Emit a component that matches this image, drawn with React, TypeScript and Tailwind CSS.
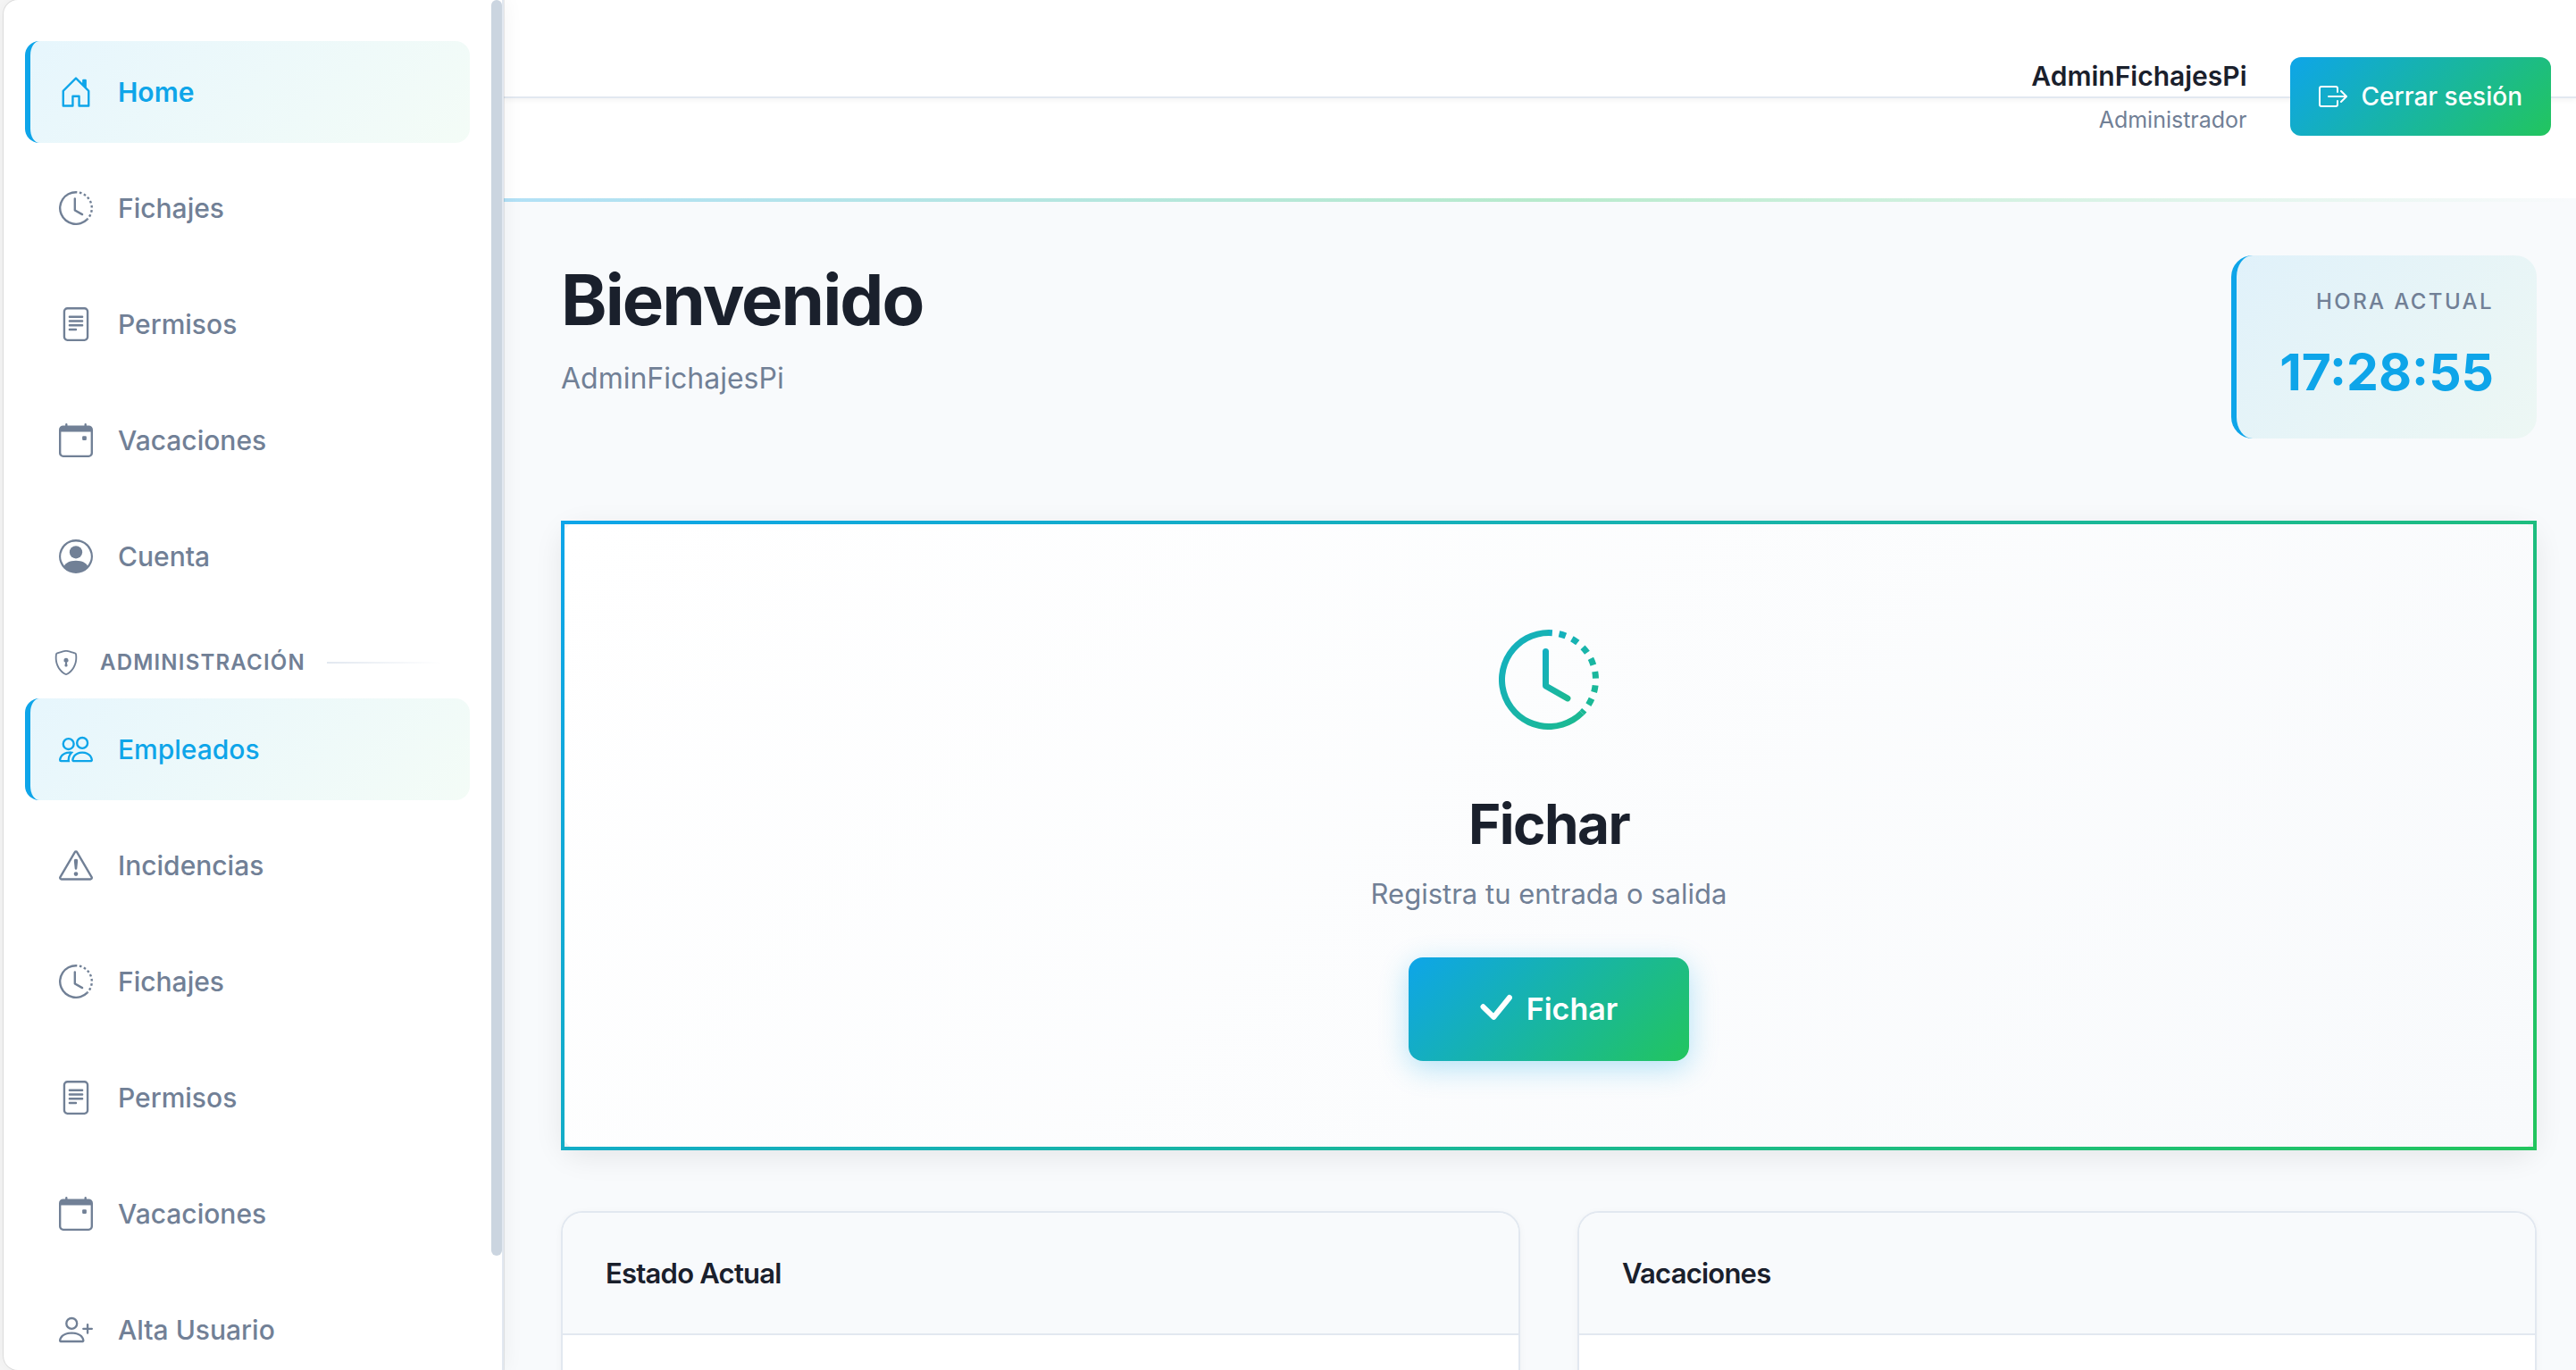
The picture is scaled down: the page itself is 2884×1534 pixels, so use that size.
import {
  BsBoxArrowRight,
  BsCalendarEvent,
  BsClockHistory,
  BsExclamationTriangle,
  BsFileText,
  BsHouseDoor,
  BsPeople,
  BsPersonCircle,
  BsPersonPlus,
  BsShieldLock,
} from "react-icons/bs";
import type { IconType } from "react-icons";

type NavItem = { label: string; icon: IconType; active?: boolean; strong?: boolean };

const mainItems: NavItem[] = [
  { label: "Home", icon: BsHouseDoor, active: true, strong: true },
  { label: "Fichajes", icon: BsClockHistory },
  { label: "Permisos", icon: BsFileText },
  { label: "Vacaciones", icon: BsCalendarEvent },
  { label: "Cuenta", icon: BsPersonCircle },
];

const adminItems: NavItem[] = [
  { label: "Empleados", icon: BsPeople, active: true },
  { label: "Incidencias", icon: BsExclamationTriangle },
  { label: "Fichajes", icon: BsClockHistory },
  { label: "Permisos", icon: BsFileText },
  { label: "Vacaciones", icon: BsCalendarEvent },
  { label: "Alta Usuario", icon: BsPersonPlus },
];

function NavList({ items }: { items: NavItem[] }) {
  return (
    <ul className="flex flex-col gap-4">
      {items.map(({ label, icon: Icon, active, strong }) => (
        <li key={label}>
          <a
            href="#"
            aria-current={strong ? "page" : undefined}
            className={`flex items-center gap-7 rounded-2xl border-l-6 py-8 pl-8 text-[30px] leading-[50px] ${
              active
                ? "border-[#0ea5e9] bg-[linear-gradient(135deg,rgba(14,165,233,0.1),rgba(34,197,94,0.05))] text-[#0ea5e9]"
                : "border-transparent text-[#718096]"
            } ${strong ? "font-semibold" : "font-medium"}`}
          >
            <Icon className="size-[38px] shrink-0" aria-hidden="true" />
            {label}
          </a>
        </li>
      ))}
    </ul>
  );
}

function Sidebar() {
  return (
    <aside className="relative z-10 flex w-[560px] shrink-0 overflow-hidden rounded-l-2xl border-r-2 border-[#e2e8f0] bg-white shadow-[0_0_24px_rgba(0,0,0,0.06),0_0_0_1px_rgba(0,0,0,0.08)]">
      <nav className="flex-1 px-6 pt-[46px]" aria-label="Principal">
        <NavList items={mainItems} />
        <div className="flex items-center gap-6 pt-[42px] pr-8 pb-5 pl-8 text-[#718096]">
          <BsShieldLock className="size-7 shrink-0" aria-hidden="true" />
          <h2 className="text-2xl leading-10 font-semibold tracking-wider uppercase">Administración</h2>
          <span className="h-0.5 flex-1 bg-linear-to-r from-[#e2e8f0] to-transparent" />
        </div>
        <NavList items={adminItems} />
      </nav>
      <div className="h-[1406px] w-3 shrink-0 rounded-full bg-[#cbd5e0]" />
    </aside>
  );
}

function Header() {
  return (
    <header className="relative bg-white">
      <div className="absolute inset-x-0 top-0 h-[110px] border-b-2 border-[#e2e8f0] shadow-[0_2px_6px_rgba(0,0,0,0.05)]" />
      <div className="relative flex items-center justify-end gap-12 pt-[61px] pr-7 pb-[68px]">
        <div className="text-right">
          <p className="text-[30px] leading-[48px] font-semibold text-[#1a202c]">AdminFichajesPi</p>
          <p className="mt-[5px] text-[25px] leading-10 text-[#718096]">Administrador</p>
        </div>
        <button
          type="button"
          className="flex items-center gap-4 rounded-xl bg-[linear-gradient(135deg,#0ea5e9,#22c55e)] px-8 py-6 text-[28px] leading-10 font-medium text-white"
        >
          <BsBoxArrowRight className="size-8" aria-hidden="true" />
          Cerrar sesión
        </button>
      </div>
      <div className="h-1 bg-[#f8fafc]">
        <div className="h-full bg-[linear-gradient(90deg,#0ea5e9,#22c55e,transparent)] opacity-30" />
      </div>
    </header>
  );
}

function Welcome() {
  return (
    <section className="flex items-start justify-between">
      <div>
        <h1 className="text-[78px] leading-[99px] font-bold tracking-tight text-[#1a202c]">Bienvenido</h1>
        <p className="mt-3.5 text-[32px] leading-[50px] text-[#718096]">AdminFichajesPi</p>
      </div>
      <div className="rounded-3xl border-l-6 border-[#0ea5e9] bg-[linear-gradient(135deg,rgba(14,165,233,0.1),rgba(34,197,94,0.05))] px-12 py-8 text-right">
        <p className="text-2xl leading-10 font-medium tracking-widest text-[#718096] uppercase">Hora actual</p>
        <p className="mt-4 text-[57px] leading-[85px] font-bold text-[#0ea5e9]">17:28:55</p>
      </div>
    </section>
  );
}

function ClockInCard() {
  return (
    <section className="mt-[92px] flex flex-col items-center rounded-3xl border-4 bg-[linear-gradient(135deg,#ffffff,#f8fafc)] pt-[118px] pb-24 shadow-[0_8px_32px_rgba(0,0,0,0.08)] [border-image:linear-gradient(135deg,#0ea5e9,#22c55e)_1]">
      <svg width="0" height="0" className="absolute" aria-hidden="true">
        <linearGradient id="clockGradient" x1="0" y1="0" x2="1" y2="1">
          <stop offset="0" stopColor="#14afc4" />
          <stop offset="1" stopColor="#1cba8e" />
        </linearGradient>
      </svg>
      <BsClockHistory className="size-28 fill-[url(#clockGradient)]" aria-hidden="true" />
      <h2 className="mt-16 text-[62px] leading-[84px] font-bold tracking-tight text-[#1a202c]">Fichar</h2>
      <p className="mt-3 text-[31px] leading-[47px] text-[#718096]">Registra tu entrada o salida</p>
      <button
        type="button"
        className="mt-12 flex items-center gap-4 rounded-2xl bg-[linear-gradient(135deg,#0ea5e9,#22c55e)] px-20 py-8 text-[34px] leading-[52px] font-semibold text-white shadow-[0_8px_32px_rgba(14,165,233,0.3)]"
      >
        <svg viewBox="0 0 36 36" className="size-9" fill="none" stroke="currentColor" strokeWidth="6" strokeLinecap="round" strokeLinejoin="round" aria-hidden="true">
          <path d="M3.500 15.300 15.300 26.800 33 5" />
        </svg>
        Fichar
      </button>
    </section>
  );
}

function InfoCard({ title }: { title: string }) {
  return (
    <section className="flex flex-1 flex-col overflow-hidden rounded-t-3xl border-2 border-b-0 border-[#e2e8f0] bg-white shadow-[0_2px_8px_rgba(0,0,0,0.04)]">
      <h3 className="border-b-2 border-[#e2e8f0] bg-[#f8fafc] px-12 py-10 text-[31px] leading-[55px] font-semibold tracking-tight text-[#1a202c]">
        {title}
      </h3>
      <div className="min-h-24 flex-1" />
    </section>
  );
}

export default function App() {
  return (
    <div className="flex h-screen overflow-hidden bg-[#f6f6f6] pl-1 font-[Inter,sans-serif]">
      <Sidebar />
      <div className="flex min-w-0 flex-1 flex-col bg-[#f8fafc]">
        <Header />
        <main className="flex flex-1 flex-col pt-[60px] pr-11 pl-16">
          <Welcome />
          <ClockInCard />
          <div className="mt-[68px] flex flex-1 gap-16">
            <InfoCard title="Estado Actual" />
            <InfoCard title="Vacaciones" />
          </div>
        </main>
      </div>
    </div>
  );
}
